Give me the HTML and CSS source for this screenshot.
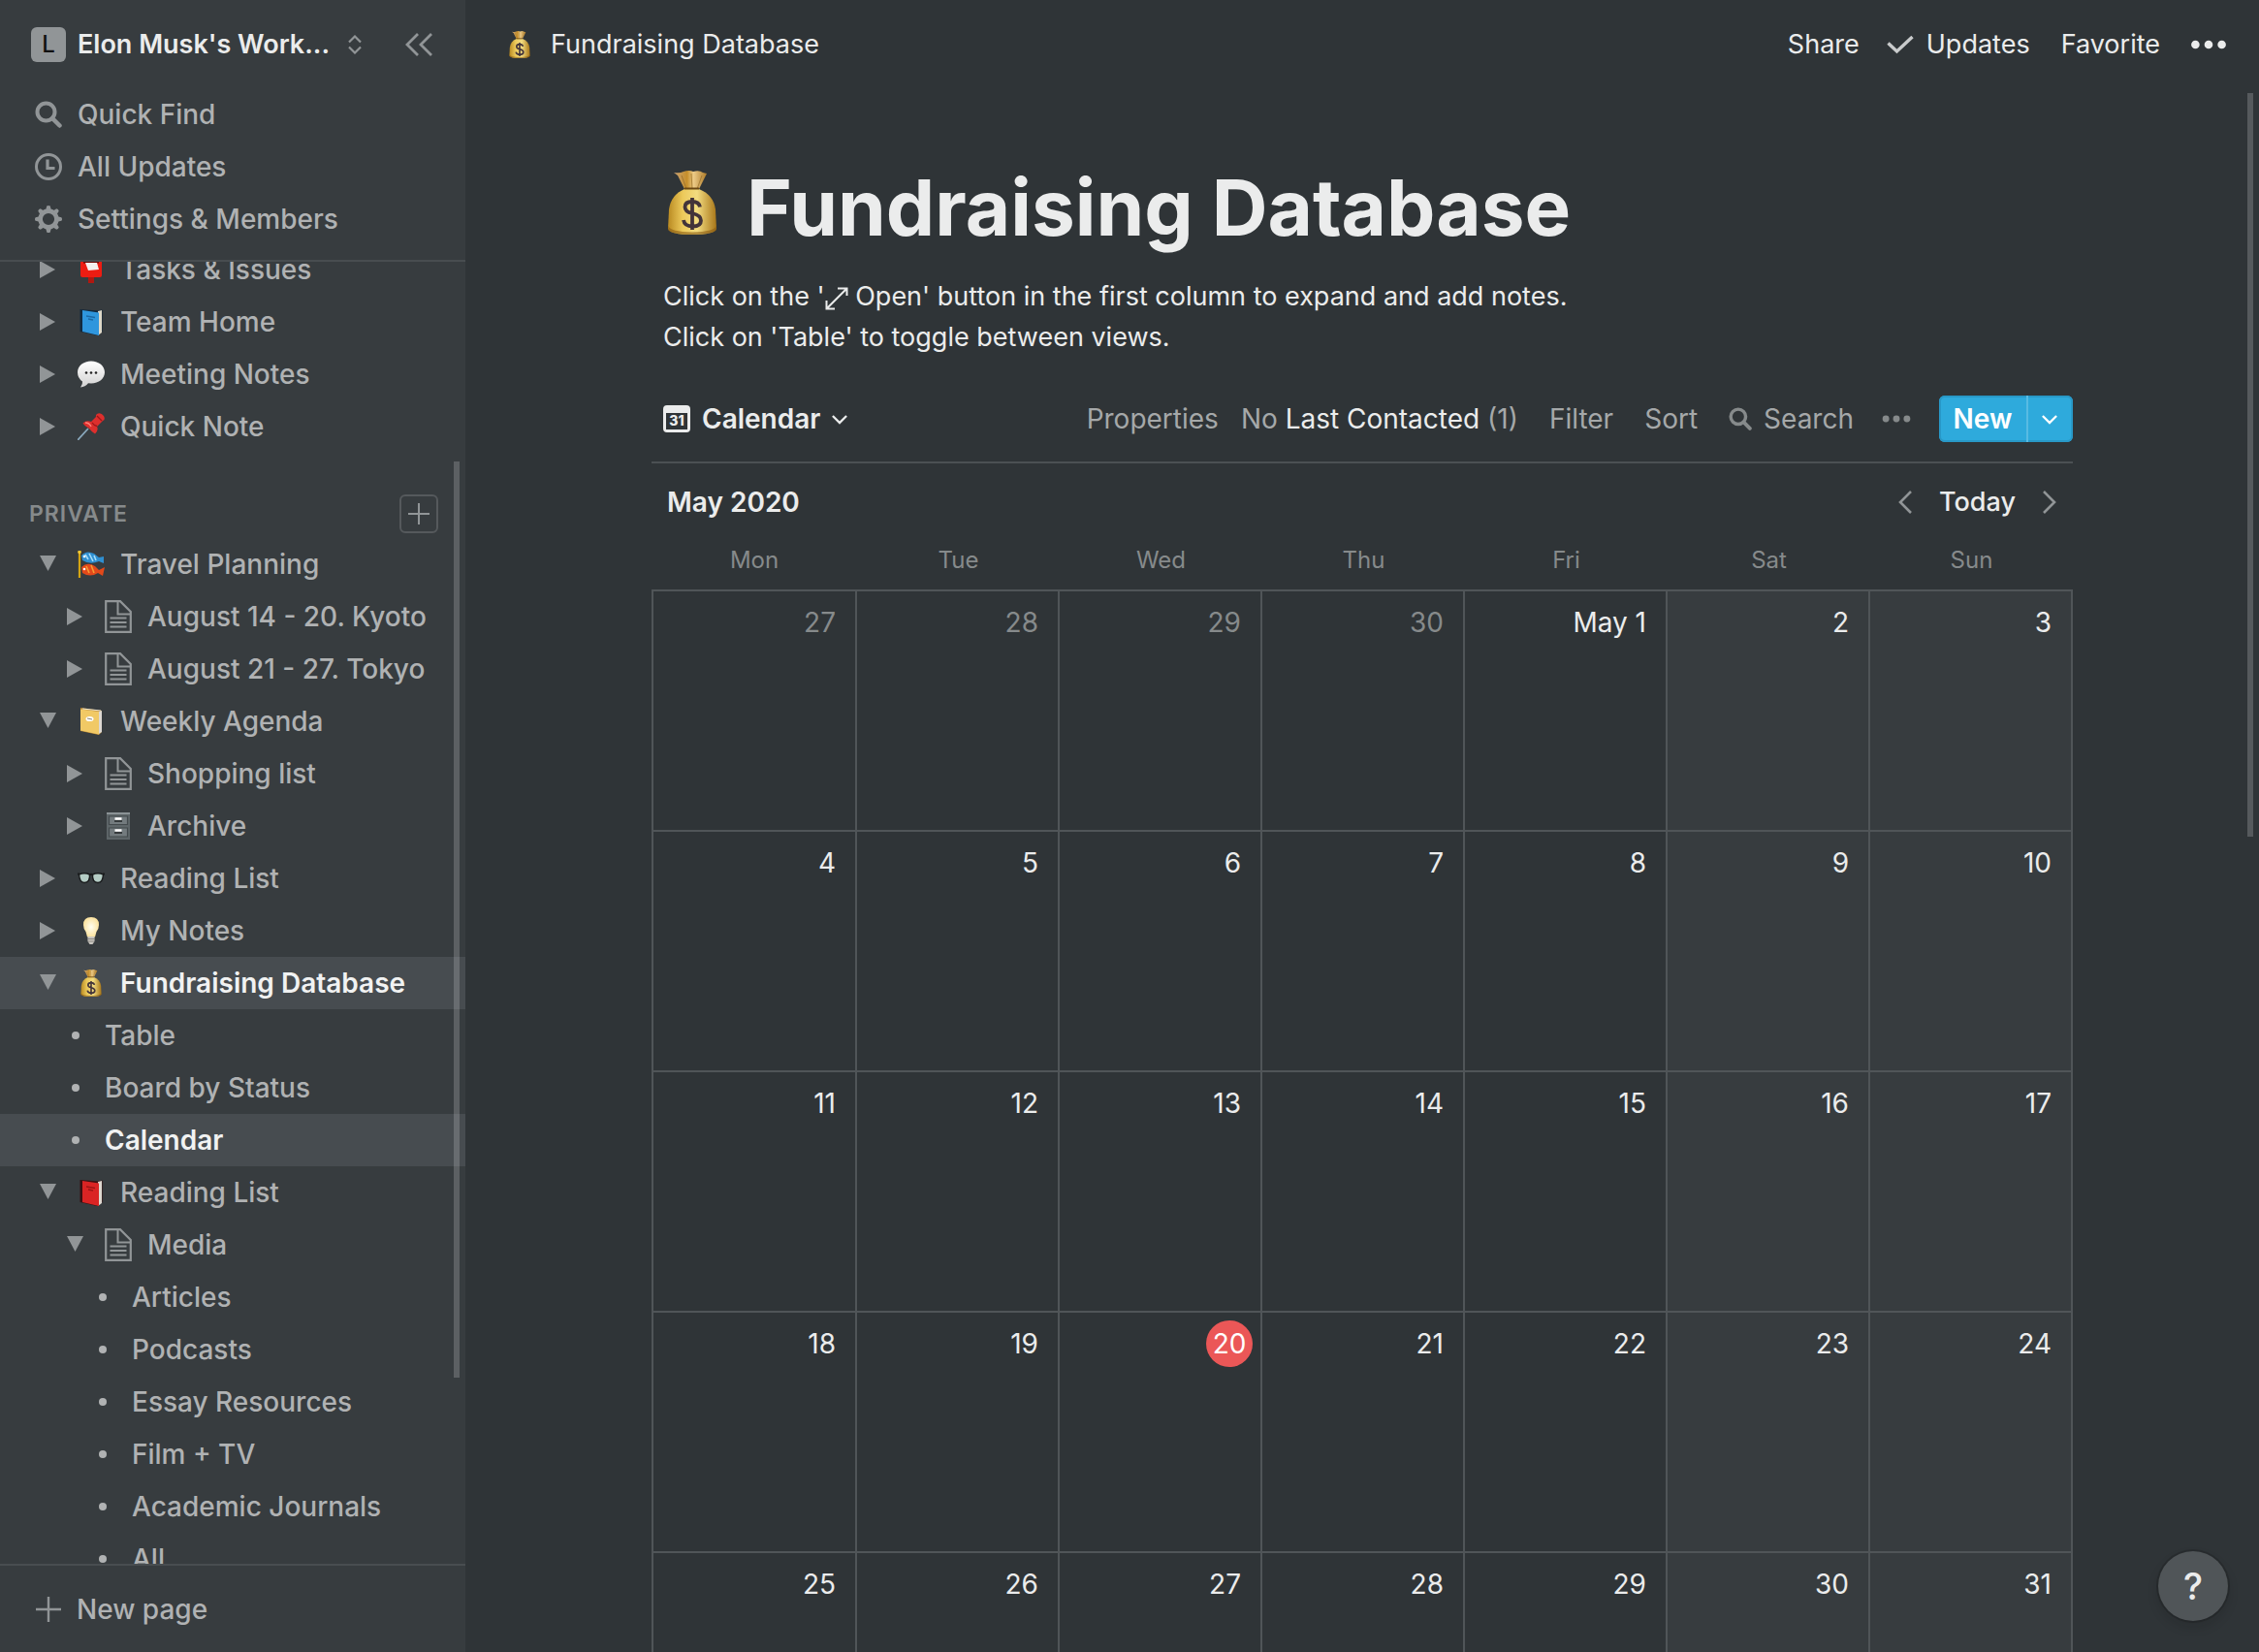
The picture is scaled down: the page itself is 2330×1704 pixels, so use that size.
FILE: index.html
```html
<!DOCTYPE html>
<html lang="en">
<head>
<meta charset="utf-8">
<title>Fundraising Database</title>
<meta name="viewport" content="width=device-width, initial-scale=1">
<link rel="stylesheet" href="styles.css">
</head>
<body>
<svg class="sprite" aria-hidden="true">
  <defs>
    <linearGradient id="gold" x1="0" x2="1"><stop offset="0" stop-color="#b98a22"/><stop offset=".3" stop-color="#ecc95a"/><stop offset=".6" stop-color="#f3dc80"/><stop offset="1" stop-color="#a87618"/></linearGradient>
    <linearGradient id="neck" x1="0" x2="1"><stop offset="0" stop-color="#caa376"/><stop offset=".4" stop-color="#c68f2b"/><stop offset=".6" stop-color="#ecca86"/><stop offset="1" stop-color="#ad7a28"/></linearGradient>
    <radialGradient id="bulbglow"><stop offset="0" stop-color="#fffef0"/><stop offset="1" stop-color="#fbe3a0"/></radialGradient>
    <linearGradient id="bubble" x1="0" y1="0" x2="0" y2="1"><stop offset="0" stop-color="#fff"/><stop offset="1" stop-color="#d2d2d2"/></linearGradient>
  </defs>
  <symbol id="i-right" viewBox="0 0 18 18"><path d="M0 0L16 9L0 18Z"/></symbol>
  <symbol id="i-down" viewBox="0 0 18 18"><path d="M0 0H17L8.500 16Z"/></symbol>
  <symbol id="i-search" viewBox="0 0 28 28"><circle cx="11.500" cy="11.500" r="9" fill="none" stroke="currentColor" stroke-width="4"/><path d="M18 18L25.500 25.500" stroke="currentColor" stroke-width="4.500" stroke-linecap="round"/></symbol>
  <symbol id="i-clock" viewBox="0 0 28 28"><circle cx="14" cy="14" r="12.500" fill="none" stroke="currentColor" stroke-width="3"/><path d="M13 6.500V15.500H20.500" fill="none" stroke="currentColor" stroke-width="3.200"/></symbol>
  <symbol id="i-gear" viewBox="0 0 28 28"><circle cx="14" cy="14" r="8.400" fill="none" stroke="currentColor" stroke-width="4.600"/><g fill="currentColor"><path id="tooth" d="M11.200 5L12.200 .6Q14 -.6 15.800 .6L16.800 5Z"/><use href="#tooth" transform="rotate(45 14 14)"/><use href="#tooth" transform="rotate(90 14 14)"/><use href="#tooth" transform="rotate(135 14 14)"/><use href="#tooth" transform="rotate(180 14 14)"/><use href="#tooth" transform="rotate(225 14 14)"/><use href="#tooth" transform="rotate(270 14 14)"/><use href="#tooth" transform="rotate(315 14 14)"/></g></symbol>
  <symbol id="i-updown" viewBox="0 0 14 20"><path d="M1 7.500L7 1.500L13 7.500M1 12.500L7 18.500L13 12.500" fill="none" stroke="currentColor" stroke-width="2.200"/></symbol>
  <symbol id="i-collapse" viewBox="0 0 28 24"><path d="M13 1L2 12L13 23M27 1L16 12L27 23" fill="none" stroke="currentColor" stroke-width="2.800"/></symbol>
  <symbol id="i-plus" viewBox="0 0 26 26"><path d="M13 0V26M0 13H26" stroke="currentColor" stroke-width="2.400"/></symbol>
  <symbol id="i-check" viewBox="0 0 28 20"><path d="M1.500 8.500L10.500 17L26.500 2" fill="none" stroke="currentColor" stroke-width="3.400"/></symbol>
  <symbol id="i-dots" viewBox="0 0 36 10"><circle cx="4.400" cy="5" r="4.300"/><circle cx="18" cy="5" r="4.300"/><circle cx="31.600" cy="5" r="4.300"/></symbol>
  <symbol id="i-chev" viewBox="0 0 18 12"><path d="M1 2L9 10L17 2" fill="none" stroke="currentColor" stroke-width="2.600"/></symbol>
  <symbol id="i-prev" viewBox="0 0 14 24"><path d="M13 1L2 12L13 23" fill="none" stroke="currentColor" stroke-width="2.600"/></symbol>
  <symbol id="i-next" viewBox="0 0 14 24"><path d="M1 1L12 12L1 23" fill="none" stroke="currentColor" stroke-width="2.600"/></symbol>
  <symbol id="i-expand" viewBox="0 0 24 24"><path d="M2 22L22 2M13 1.500H22.500V9M1.500 14V22.500H10" fill="none" stroke="currentColor" stroke-width="2"/></symbol>
  <symbol id="i-page" viewBox="0 0 28 34"><path d="M1.200 1.200H16L26.800 12V32.800H1.200Z" fill="none" stroke="currentColor" stroke-width="2.200"/><path d="M13.500 1V14.500H27M5.500 18.500H22.500M5.500 23H22.500M5.500 27.500H22.500" fill="none" stroke="currentColor" stroke-width="2"/></symbol>
  <symbol id="e-bag" viewBox="0 0 66 66"><path d="M14 2Q20 3 24 1Q30 -1 34 1Q40 -1 44 2L48 3L40 19H25L18 5Z" fill="url(#neck)"/><path d="M27 19L22 5M33 19L32 3M38 19L43 5" stroke="#8d6420" stroke-width="1" opacity=".6"/><path d="M25 19H40Q55 25 57 40L58 60Q56 66 33 66Q10 66 8 60L9 40Q11 25 25 19Z" fill="url(#gold)"/><path d="M8.500 57Q10 63 33 63.500Q56 63 57.500 57L58 61Q54 66 33 66Q12 66 8 61Z" fill="#8a5c12" opacity=".6"/><path d="M25 18.500H40" stroke="#6b4712" stroke-width="2"/><path d="M41 37.500Q40 32 33 32Q25.500 32 25.500 37.500Q25.500 42.500 33 44Q42 46 42 51.500Q42 57.500 33.500 57.500Q25 57.500 24 51M33 28V61" fill="none" stroke="#43343a" stroke-width="3.800"/></symbol>
  <symbol id="e-post" viewBox="0 0 28 28"><rect x="11" y="19" width="6" height="9" fill="#b01810"/><path d="M3 6Q3 0 14 0Q25 0 25 6V20Q25 22 23 22H5Q3 22 3 20Z" fill="#ed1c12"/><path d="M6 6.500H22" stroke="#6c0905" stroke-width="2"/><path d="M8 7H20L22 14L11 15Z" fill="#f4f0ee"/></symbol>
  <symbol id="e-bluebook" viewBox="0 0 28 28"><path d="M2.500 1L22 2.500L25.500 1.500V24L20 28L2.500 24Z" fill="#12293e"/><path d="M21 3L25 2V25L21 28Z" fill="#ded8c8"/><path d="M5 2L22 4.500V28L5 24Z" fill="#2f96dd"/><path d="M9 8L18 9.500M11 11L16 12" stroke="#1c69a5" stroke-width="1.300"/></symbol>
  <symbol id="e-redbook" viewBox="0 0 28 28"><path d="M2.500 1L22 2.500L25.500 1.500V24L20 28L2.500 24Z" fill="#3a1112"/><path d="M21 3L25 2V25L21 28Z" fill="#ded8d0"/><path d="M5 2L22 4.500V28L5 24Z" fill="#da2424"/><path d="M9 8L18 9.500M11 11L16 12" stroke="#9c1515" stroke-width="1.300"/></symbol>
  <symbol id="e-bubble" viewBox="0 0 28 28"><path d="M14 .5C22 .5 28 5.500 28 12S22 23.500 14 23.500L11 23.300Q8 27 3 27.500Q5.500 24 5 21.500Q0 18 0 12C0 5.500 6 .5 14 .5Z" fill="url(#bubble)"/><circle cx="9" cy="12.500" r="1.300" fill="#222"/><circle cx="14" cy="12.500" r="1.300" fill="#222"/><circle cx="19" cy="12.500" r="1.300" fill="#222"/></symbol>
  <symbol id="e-pin" viewBox="0 0 28 28"><path d="M0 28L11 16" stroke="#8aa9bd" stroke-width="1.800"/><path d="M20 1Q24 -1 27 3Q29 7 26 8L20 14Q22 18 18 21.500Q15 20 12 16Q7 13 5.500 10.500Q9 7 14 9L19 4Q18.500 2 20 1Z" fill="#dd2f2d"/><path d="M15 10Q17 13 20 13.500M20 3L25 8" stroke="#9c1517" stroke-width="1.300" fill="none"/><path d="M8 10Q12 10 14 14" stroke="#ff8078" stroke-width="1.500" fill="none"/></symbol>
  <symbol id="e-carp" viewBox="0 0 28 28"><path d="M2 0V28" stroke="#d4a514" stroke-width="2.200"/><circle cx="2" cy="1.600" r="1.800" fill="#f2c733"/><path d="M4 5Q9 -1 17 3L22 7L27 6V13L22 11Q13 15 5 10Z" fill="#2f8fd0"/><path d="M8 4L11 9M12 3L16 11M17 5L19 10" stroke="#a5dcf8" stroke-width="1.600"/><circle cx="7" cy="6" r="1.300" fill="#fff"/><path d="M4 17Q10 11 18 16L22 20L28 17L26 26L21 23Q13 28 5 23Z" fill="#e2491a"/><path d="M9 16L12 23M14 15L17 23" stroke="#f59c34" stroke-width="1.600"/><circle cx="7" cy="19" r="1.300" fill="#fff"/></symbol>
  <symbol id="e-notebook" viewBox="0 0 28 28"><path d="M3 0L25 3V25L22 28L3 24Z" fill="#b98a38"/><path d="M22 4L25 3V25L22 27Z" fill="#ddd8d2"/><path d="M3 1.500L22 4V27.500L3 23.500Z" fill="#f1c965"/><path d="M5 1L24 3" stroke="#eee6d2" stroke-width="1.200"/><ellipse cx="12.500" cy="11.500" rx="4" ry="2.600" fill="#fff"/><path d="M10 11L15 12" stroke="#8b8576" stroke-width="1"/></symbol>
  <symbol id="e-cabinet" viewBox="0 0 28 28"><path d="M2 0H26V28H2Z" fill="#5e6669"/><path d="M2 1H26" stroke="#8a9295" stroke-width="2"/><path d="M4.500 4H23.500V12.500H4.500ZM4.500 16H23.500V25H4.500Z" fill="#737b7e" stroke="#434a4d" stroke-width="1.200"/><path d="M10.500 6.500H17.500M10.500 18.500H17.500" stroke="#fff" stroke-width="2.600"/><path d="M10 9H18M10 21H18" stroke="#353a3c" stroke-width="1.800"/></symbol>
  <symbol id="e-glasses" viewBox="0 0 28 28"><g fill="#b5cdc5" stroke="#191b1c" stroke-width="1.400"><path d="M1.500 10Q7 7.500 12.500 10Q13 18.500 7 18.500Q2 18.500 1.500 10Z"/><path d="M15.500 10Q21 7.500 26.500 10Q26 18.500 21 18.500Q15 18.500 15.500 10Z"/></g><path d="M0 9.500H2M12 10.500Q14 9 16 10.500M26 9.500H28" stroke="#191b1c" stroke-width="2" fill="none"/></symbol>
  <symbol id="e-bulb" viewBox="0 0 28 28"><path d="M14 0Q22 0 22 8Q22 12 19.500 15L18 20.500H10L8.500 15Q6 12 6 8Q6 0 14 0Z" fill="url(#bulbglow)"/><path d="M10.500 20H17.500V25L15.500 28H12.500L10.500 25Z" fill="#c9c6c0"/><path d="M10.500 22.500H17.500M11 25H17" stroke="#8a8781" stroke-width="1"/></symbol>
</svg>

<div class="app">
  <aside class="sidebar">
    <header class="workspace">
      <button class="workspace-switch" type="button">
        <span class="avatar">L</span>
        <span class="workspace-name">Elon Musk's Work...</span>
        <svg class="updown" aria-hidden="true"><use href="#i-updown"/></svg>
      </button>
      <button class="collapse" type="button" aria-label="Close sidebar"><svg aria-hidden="true"><use href="#i-collapse"/></svg></button>
    </header>
    <nav class="quick" aria-label="Workspace">
      <a href="#find"><svg aria-hidden="true"><use href="#i-search"/></svg>Quick Find</a>
      <a href="#updates"><svg aria-hidden="true"><use href="#i-clock"/></svg>All Updates</a>
      <a href="#settings"><svg aria-hidden="true"><use href="#i-gear"/></svg>Settings &amp; Members</a>
    </nav>

    <nav class="pages" aria-label="Pages">
      <ul class="tree scrolled">
        <li class="row"><button class="toggle" type="button" aria-label="Expand"><svg><use href="#i-right"/></svg></button><a href="#tasks"><svg class="emoji"><use href="#e-post"/></svg>Tasks &amp; Issues</a></li>
        <li class="row"><button class="toggle" type="button" aria-label="Expand"><svg><use href="#i-right"/></svg></button><a href="#team"><svg class="emoji"><use href="#e-bluebook"/></svg>Team Home</a></li>
        <li class="row"><button class="toggle" type="button" aria-label="Expand"><svg><use href="#i-right"/></svg></button><a href="#meeting"><svg class="emoji"><use href="#e-bubble"/></svg>Meeting Notes</a></li>
        <li class="row"><button class="toggle" type="button" aria-label="Expand"><svg><use href="#i-right"/></svg></button><a href="#quicknote"><svg class="emoji"><use href="#e-pin"/></svg>Quick Note</a></li>
      </ul>
      <div class="section">
        <h2>PRIVATE</h2>
        <button class="add" type="button" aria-label="Add a page"><svg><use href="#i-plus"/></svg></button>
      </div>
      <ul class="tree">
        <li class="row"><button class="toggle" type="button" aria-label="Collapse"><svg><use href="#i-down"/></svg></button><a href="#travel"><svg class="emoji"><use href="#e-carp"/></svg>Travel Planning</a></li>
        <li class="row level-1"><button class="toggle" type="button" aria-label="Expand"><svg><use href="#i-right"/></svg></button><a href="#kyoto"><svg class="page"><use href="#i-page"/></svg>August 14 - 20. Kyoto</a></li>
        <li class="row level-1"><button class="toggle" type="button" aria-label="Expand"><svg><use href="#i-right"/></svg></button><a href="#tokyo"><svg class="page"><use href="#i-page"/></svg>August 21 - 27. Tokyo</a></li>
        <li class="row"><button class="toggle" type="button" aria-label="Collapse"><svg><use href="#i-down"/></svg></button><a href="#agenda"><svg class="emoji"><use href="#e-notebook"/></svg>Weekly Agenda</a></li>
        <li class="row level-1"><button class="toggle" type="button" aria-label="Expand"><svg><use href="#i-right"/></svg></button><a href="#shopping"><svg class="page"><use href="#i-page"/></svg>Shopping list</a></li>
        <li class="row level-1"><button class="toggle" type="button" aria-label="Expand"><svg><use href="#i-right"/></svg></button><a href="#archive"><svg class="emoji"><use href="#e-cabinet"/></svg>Archive</a></li>
        <li class="row"><button class="toggle" type="button" aria-label="Expand"><svg><use href="#i-right"/></svg></button><a href="#reading"><svg class="emoji"><use href="#e-glasses"/></svg>Reading List</a></li>
        <li class="row"><button class="toggle" type="button" aria-label="Expand"><svg><use href="#i-right"/></svg></button><a href="#notes"><svg class="emoji"><use href="#e-bulb"/></svg>My Notes</a></li>
        <li class="row active"><button class="toggle" type="button" aria-label="Collapse"><svg><use href="#i-down"/></svg></button><a href="#fundraising"><svg class="emoji"><use href="#e-bag"/></svg>Fundraising Database</a></li>
        <li class="row view level-1"><a href="#table">Table</a></li>
        <li class="row view level-1"><a href="#board">Board by Status</a></li>
        <li class="row view level-1 active"><a href="#calendar" aria-current="page">Calendar</a></li>
        <li class="row"><button class="toggle" type="button" aria-label="Collapse"><svg><use href="#i-down"/></svg></button><a href="#list"><svg class="emoji"><use href="#e-redbook"/></svg>Reading List</a></li>
        <li class="row level-1"><button class="toggle" type="button" aria-label="Collapse"><svg><use href="#i-down"/></svg></button><a href="#media"><svg class="page"><use href="#i-page"/></svg>Media</a></li>
        <li class="row view level-2"><a href="#articles">Articles</a></li>
        <li class="row view level-2"><a href="#podcasts">Podcasts</a></li>
        <li class="row view level-2"><a href="#essays">Essay Resources</a></li>
        <li class="row view level-2"><a href="#film">Film + TV</a></li>
        <li class="row view level-2"><a href="#journals">Academic Journals</a></li>
        <li class="row view level-2"><a href="#all">All</a></li>
      </ul>
      <div class="thumb pages-thumb"></div>
    </nav>
    <button class="new-page" type="button"><svg aria-hidden="true"><use href="#i-plus"/></svg>New page</button>
  </aside>

  <div class="content">
    <header class="topbar">
      <a class="crumb" href="#fundraising"><svg class="emoji"><use href="#e-bag"/></svg>Fundraising Database</a>
      <div class="actions">
        <button type="button">Share</button>
        <button type="button" class="updates"><svg aria-hidden="true"><use href="#i-check"/></svg>Updates</button>
        <button type="button">Favorite</button>
        <button type="button" class="more" aria-label="More"><svg><use href="#i-dots"/></svg></button>
      </div>
    </header>

    <main class="document">
      <h1><svg class="title-emoji" aria-hidden="true"><use href="#e-bag"/></svg>Fundraising Database</h1>
      <p class="description">Click on the '<svg class="expand" aria-hidden="true"><use href="#i-expand"/></svg> Open' button in the first column to expand and add notes.<br>Click on 'Table' to toggle between views.</p>

      <div class="toolbar">
        <button type="button" class="view-switch">
          <svg class="cal" viewBox="0 0 28 28" aria-hidden="true"><path fill-rule="evenodd" d="M4 0H24Q28 0 28 4V24Q28 28 24 28H4Q0 28 0 24V4Q0 0 4 0ZM3 8V25H25V8Z"/><text x="14" y="21" text-anchor="middle">31</text></svg>
          Calendar
          <svg class="chev" aria-hidden="true"><use href="#i-chev"/></svg>
        </button>
        <div class="tools">
          <button type="button" class="properties">Properties</button>
          <button type="button">No <span class="bright">Last Contacted</span> (1)</button>
          <button type="button">Filter</button>
          <button type="button">Sort</button>
          <button type="button" class="search"><svg aria-hidden="true"><use href="#i-search"/></svg>Search</button>
          <button type="button" class="more" aria-label="View options"><svg><use href="#i-dots"/></svg></button>
          <div class="new">
            <button type="button" class="new-main">New</button>
            <button type="button" class="new-menu" aria-label="Templates"><svg class="chev"><use href="#i-chev"/></svg></button>
          </div>
        </div>
      </div>

      <div class="month">
        <h2>May 2020</h2>
        <div class="pager">
          <button type="button" aria-label="Previous month"><svg><use href="#i-prev"/></svg></button>
          <button type="button" class="today-button">Today</button>
          <button type="button" aria-label="Next month"><svg><use href="#i-next"/></svg></button>
        </div>
      </div>

      <table class="calendar">
        <thead><tr><th scope="col">Mon</th><th scope="col">Tue</th><th scope="col">Wed</th><th scope="col">Thu</th><th scope="col">Fri</th><th scope="col">Sat</th><th scope="col">Sun</th></tr></thead>
        <tbody>
          <tr><td class="outside"><span>27</span></td><td class="outside"><span>28</span></td><td class="outside"><span>29</span></td><td class="outside"><span>30</span></td><td><span>May 1</span></td><td><span>2</span></td><td><span>3</span></td></tr>
          <tr><td><span>4</span></td><td><span>5</span></td><td><span>6</span></td><td><span>7</span></td><td><span>8</span></td><td><span>9</span></td><td><span>10</span></td></tr>
          <tr><td><span>11</span></td><td><span>12</span></td><td><span>13</span></td><td><span>14</span></td><td><span>15</span></td><td><span>16</span></td><td><span>17</span></td></tr>
          <tr><td><span>18</span></td><td><span>19</span></td><td><span class="today">20</span></td><td><span>21</span></td><td><span>22</span></td><td><span>23</span></td><td><span>24</span></td></tr>
          <tr><td><span>25</span></td><td><span>26</span></td><td><span>27</span></td><td><span>28</span></td><td><span>29</span></td><td><span>30</span></td><td><span>31</span></td></tr>
        </tbody>
      </table>
    </main>
    <div class="thumb content-thumb"></div>
    <button class="help" type="button" aria-label="Help">?</button>
  </div>
</div>
</body>
</html>
```
FILE: styles.css
```css
:root {
  --bg: #2f3437;
  --panel: #373c3f;
  --active: #474c50;
  --line: #505558;
  --text: #ebecec;
  --soft: #b0b2b3;
  --icon: #919597;
  --dim: #868a8b;
}

* { box-sizing: border-box; }

body {
  margin: 0;
  background: var(--bg);
  color: var(--text);
  font-family: Inter, "Liberation Sans", sans-serif;
  font-size: 28px;
  line-height: 42px;
}

button {
  display: flex;
  align-items: center;
  padding: 0;
  border: 0;
  background: none;
  color: inherit;
  font: inherit;
  white-space: nowrap;
}

a { color: inherit; text-decoration: none; }
svg { display: block; flex: none; fill: currentColor; }
ul { margin: 0; padding: 0; list-style: none; }
h1, h2, p { margin: 0; }

.sprite { position: absolute; width: 0; height: 0; }

.app {
  display: grid;
  grid-template-columns: 480px minmax(0, 1fr);
  height: 100vh;
  overflow: hidden;
}

/* Sidebar */
.sidebar {
  display: flex;
  flex-direction: column;
  min-height: 0;
  background: var(--panel);
  color: var(--soft);
  font-weight: 500;
}

.workspace {
  display: flex;
  align-items: center;
  justify-content: space-between;
  height: 91px;
  padding: 0 34px 0 32px;
}

.workspace-switch { gap: 12px; color: var(--text); font-size: 27px; font-weight: 600; }
.workspace-name { width: 267px; text-align: left; }

.avatar {
  width: 36px;
  height: 36px;
  border-radius: 6px;
  background: #919597;
  color: #111;
  font-size: 24px;
  font-weight: 500;
  line-height: 36px;
  text-align: center;
}

.updown { width: 14px; height: 20px; color: var(--icon); }
.collapse { color: var(--icon); }
.collapse svg { width: 28px; height: 24px; }

.quick { padding-bottom: 15px; border-bottom: 2px solid #484d50; }

.quick a {
  display: flex;
  align-items: center;
  gap: 16px;
  height: 54px;
  padding-left: 36px;
}

.quick svg { width: 28px; height: 28px; color: var(--icon); }

.pages {
  position: relative;
  flex: 1;
  min-height: 0;
  overflow: hidden;
}

/* The list rests with its first row partly scrolled away. */
.scrolled { margin-top: -19px; }

.row {
  display: flex;
  align-items: center;
  height: 54px;
  padding-left: 28px;
}

.level-1 { padding-left: 56px; }
.level-2 { padding-left: 84px; }
.active { background: var(--active); }
.active a { color: #f1f2f2; font-weight: 600; }

.toggle { justify-content: center; width: 44px; color: var(--icon); }
.toggle svg { width: 18px; height: 18px; }

.row a { display: flex; align-items: center; white-space: nowrap; }
.row a svg { margin: 0 16px 0 8px; }
.emoji { width: 28px; height: 28px; }
.page { width: 28px; height: 34px; color: var(--icon); }

.view::before {
  content: "";
  width: 8px;
  height: 8px;
  margin: 0 26px 0 18px;
  border-radius: 50%;
  background: var(--soft);
}

.section {
  display: flex;
  align-items: center;
  justify-content: space-between;
  height: 50px;
  margin-top: 38px;
  padding: 0 28px 0 30px;
}

.section h2 {
  color: var(--dim);
  font-size: 23px;
  font-weight: 600;
  letter-spacing: 1px;
}

.add {
  justify-content: center;
  width: 40px;
  height: 40px;
  border: 2px solid #55595c;
  border-radius: 6px;
  color: var(--icon);
}

.add svg { width: 22px; height: 22px; }

.thumb {
  position: absolute;
  width: 6px;
  background: rgba(202, 204, 206, 0.25);
}

.pages-thumb { top: 206px; right: 6px; height: 70.400%; }

.new-page {
  gap: 16px;
  height: 91px;
  padding-left: 37px;
  border-top: 2px solid #484d50;
}

.new-page svg { width: 26px; height: 26px; color: var(--icon); }

/* Content */
.content { position: relative; min-width: 0; overflow: hidden; }

.topbar {
  display: flex;
  align-items: center;
  justify-content: space-between;
  height: 92px;
  padding: 0 34px 0 42px;
  font-size: 27px;
}

.crumb { display: flex; align-items: center; gap: 18px; }
.actions { display: flex; align-items: center; gap: 32px; }
.updates { gap: 13px; }
.updates svg { width: 28px; height: 20px; color: #c9cbcc; }
.actions .updates { margin-left: -4px; }
.actions .more svg { width: 36px; height: 10px; }

.document { padding: 70px 192px 0; }

h1 {
  display: flex;
  align-items: center;
  gap: 23px;
  padding-left: 9px;
  font-size: 80px;
  font-weight: 700;
  line-height: 104px;
}

.title-emoji { width: 66px; height: 66px; margin-bottom: 10px; }

.description { padding: 19px 12px 0; font-size: 27px; }
.expand { display: inline-block; width: 24px; height: 24px; vertical-align: -5px; }

.toolbar {
  display: flex;
  align-items: center;
  justify-content: space-between;
  height: 92px;
  margin-top: 17px;
  padding: 2px 0 0 12px;
  border-bottom: 2px solid #4b5053;
}

.view-switch { gap: 12px; font-weight: 600; }
.cal { width: 28px; height: 28px; }
.cal text { font-size: 14px; font-weight: 800; }
.chev { width: 16px; height: 11px; }

.tools { display: flex; align-items: center; gap: 32px; color: #a5a8a9; }
.properties { margin-right: -9px; }
.bright { color: var(--text); white-space: pre; }
.tools button { white-space: pre; }
.search { gap: 12px; }
.search svg { width: 24px; height: 24px; color: var(--dim); }
.tools .more { margin: 0 -3px; color: var(--dim); }
.tools .more svg { width: 30px; height: 8px; }

.new {
  display: flex;
  height: 48px;
  border-radius: 6px;
  background: #2eaadc;
  box-shadow: inset 0 0 0 2px #2898c7;
  color: #fff;
  font-weight: 600;
}

.new-main { justify-content: center; width: 90px; }
.new-menu { justify-content: center; width: 48px; padding-right: 2px; border-left: 2px solid #58bbe3; }

.month {
  display: flex;
  align-items: center;
  justify-content: space-between;
  height: 80px;
  padding: 0 17px 0 16px;
}

.month h2 { font-size: 28px; font-weight: 600; }
.pager { display: flex; align-items: center; gap: 28px; }
.pager svg { width: 14px; height: 24px; color: var(--icon); }
.today-button { font-size: 27px; font-weight: 500; }

.calendar {
  width: 100%;
  border-collapse: separate;
  border-spacing: 0;
  table-layout: fixed;
}

.calendar th {
  height: 50px;
  padding: 0 0 10px;
  color: var(--dim);
  font-size: 24px;
  font-weight: 400;
  line-height: 38px;
}

.calendar th:first-child { width: 212px; }

.calendar td {
  height: 248px;
  padding: 8px 8px 0 0;
  border-right: 2px solid var(--line);
  border-bottom: 2px solid var(--line);
  text-align: right;
  vertical-align: top;
}

.calendar td:first-child { border-left: 2px solid var(--line); }
.calendar tbody tr:first-child td { height: 250px; border-top: 2px solid var(--line); }
.calendar td:nth-child(n + 6) { background: var(--panel); }

.calendar span { display: inline-block; padding-right: 12px; line-height: 48px; }
.calendar .outside { color: var(--dim); }

.calendar .today {
  width: 48px;
  padding: 0;
  border-radius: 50%;
  background: #eb5757;
  color: #fff;
  text-align: center;
}

.content-thumb { top: 96px; right: 6px; height: 45%; }

.help {
  position: absolute;
  right: 32px;
  bottom: 32px;
  justify-content: center;
  width: 72px;
  height: 72px;
  border-radius: 50%;
  background: #505558;
  box-shadow: 0 0 0 2px rgba(15, 15, 15, 0.2), 0 6px 12px rgba(15, 15, 15, 0.15);
  font-size: 38px;
  font-weight: 500;
}
```
